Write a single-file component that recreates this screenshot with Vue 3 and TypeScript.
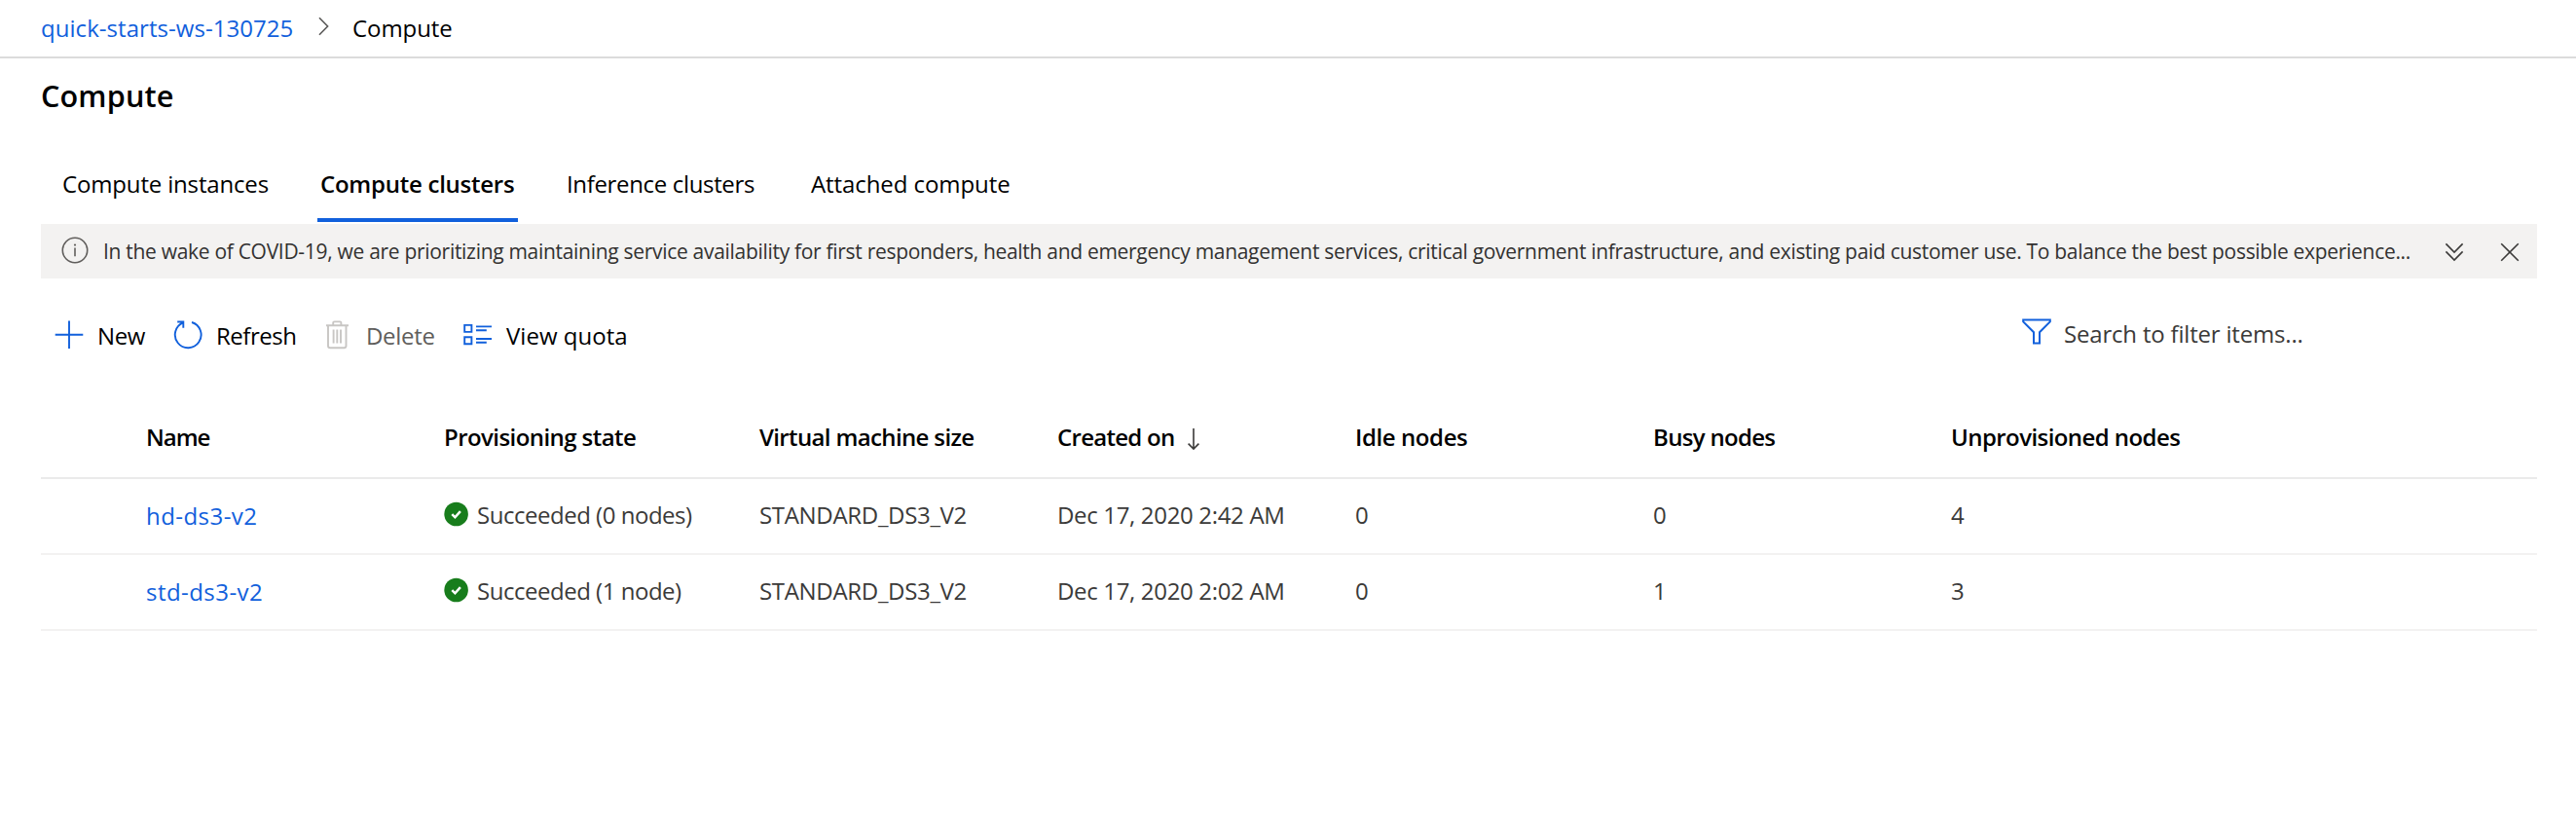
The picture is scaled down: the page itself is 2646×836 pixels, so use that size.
<script setup lang="ts">
interface Cluster {
  name: string
  state: string
  size: string
  created: string
  idle: number
  busy: number
  unprovisioned: number
}

const tabs: { id: string; label: string }[] = [
  { id: 'instances', label: 'Compute instances' },
  { id: 'clusters', label: 'Compute clusters' },
  { id: 'inference', label: 'Inference clusters' },
  { id: 'attached', label: 'Attached compute' },
]
const activeTab = 'clusters'

const clusters: Cluster[] = [
  { name: 'hd-ds3-v2', state: 'Succeeded (0 nodes)', size: 'STANDARD_DS3_V2', created: 'Dec 17, 2020 2:42 AM', idle: 0, busy: 0, unprovisioned: 4 },
  { name: 'std-ds3-v2', state: 'Succeeded (1 node)', size: 'STANDARD_DS3_V2', created: 'Dec 17, 2020 2:02 AM', idle: 0, busy: 1, unprovisioned: 3 },
]
</script>

<template>
  <div class="page">
    <nav class="crumbs">
      <a class="crumb-link">quick-starts-ws-130725</a>
      <svg class="crumb-sep" width="12" height="20" viewBox="0 0 12 20"><path d="M1 1.2 9.6 10 1 18.8" /></svg>
      <span class="crumb-current">Compute</span>
    </nav>

    <main class="content">
      <h1 class="title">Compute</h1>

      <div class="tabs">
        <a v-for="tab in tabs" :key="tab.id" class="tab" :class="[tab.id, { active: tab.id === activeTab }]">{{ tab.label }}</a>
      </div>

      <div class="notice">
        <svg class="info" width="28" height="28" viewBox="0 0 28 28">
          <circle cx="14" cy="14" r="12.7" />
          <path d="M14 11.6V20.2" />
          <circle class="dot" cx="14" cy="8.6" r="1.1" />
        </svg>
        <p class="notice-text">In the wake of COVID-19, we are prioritizing maintaining service availability for first responders, health and emergency management services, critical government infrastructure, and existing paid customer use. To balance the best possible experience...</p>
        <svg class="expand" width="20" height="20" viewBox="0 0 20 20"><path d="M1.4 1.4 10 10 18.6 1.4M1.4 9.4 10 18 18.6 9.4" /></svg>
        <svg class="close" width="20" height="20" viewBox="0 0 20 20"><path d="M1.2 1.2 18.8 18.8M18.8 1.2 1.2 18.8" /></svg>
      </div>

      <div class="toolbar">
        <button class="tool new">
          <svg width="32" height="32" viewBox="0 0 32 32"><path d="M16 1.5V30M1.7 15.7H30.3" /></svg>
          <span>New</span>
        </button>
        <button class="tool refresh">
          <svg width="32" height="32" viewBox="0 0 32 32"><path d="M20 3A13.4 13.4 0 1 1 11.2 3.4M5.2 2.5H11.3V8.8" /></svg>
          <span>Refresh</span>
        </button>
        <button class="tool delete">
          <svg width="32" height="32" viewBox="0 0 32 32"><path d="M5 6.2H28M12.2 6V3.6Q12.2 2.4 13.4 2.4H19.2Q20.4 2.4 20.4 3.6V6M7 6.2V27.2Q7 29.3 9.2 29.3H23.3Q25.5 29.3 25.5 27.2V6.2M12.6 10.5V24.5M16.3 10.5V24.5M20 10.5V24.5" /></svg>
          <span>Delete</span>
        </button>
        <button class="tool quota">
          <svg width="32" height="32" viewBox="0 0 32 32"><path d="M3.2 5.9H10.4V12.9H3.2ZM3.2 18.3H10.4V25.3H3.2ZM15 7.4H31M15 11.2H25.8M15 20H31M15 23.8H25.8" /></svg>
          <span>View quota</span>
        </button>
        <div class="search">
          <svg width="32" height="28" viewBox="0 0 32 28"><path d="M2.2 2.4H29.8V4.4L19 15.2V26.4H13V15.2L2.2 4.4Z" /></svg>
          <span>Search to filter items...</span>
        </div>
      </div>

      <div class="table">
        <div class="row head">
          <span class="h-name">Name</span>
          <span class="h-state">Provisioning state</span>
          <span class="h-size">Virtual machine size</span>
          <span class="h-created">Created on<svg class="sort" width="14" height="24" viewBox="0 0 14 24"><path d="M7 1V22M1.6 16.6 7 22 12.4 16.6" /></svg></span>
          <span class="h-idle">Idle nodes</span>
          <span class="h-busy">Busy nodes</span>
          <span class="h-unprov">Unprovisioned nodes</span>
        </div>
        <div v-for="c in clusters" :key="c.name" class="row">
          <a class="name">{{ c.name }}</a>
          <span class="state">
            <svg class="ok" width="26" height="26" viewBox="0 0 26 26">
              <circle cx="12.6" cy="13" r="12.3" />
              <path d="M8.3 13.2 11.4 16.3 16.9 10.2" />
            </svg>
            <span>{{ c.state }}</span>
          </span>
          <span class="size">{{ c.size }}</span>
          <span class="created">{{ c.created }}</span>
          <span>{{ c.idle }}</span>
          <span>{{ c.busy }}</span>
          <span>{{ c.unprovisioned }}</span>
        </div>
      </div>
    </main>
  </div>
</template>

<style>
body {
  margin: 0;
  background: #fff;
}
</style>

<style scoped>
.page {
  height: 836px;
  overflow: hidden;
  color: #000;
  background: #fff;
  font: 24px/32px "Open Sans", "Noto Sans", sans-serif;
  white-space: nowrap;
}
svg {
  display: block;
  flex: none;
  fill: none;
  stroke: #3b3a39;
  stroke-width: 1.6;
}
.crumbs {
  display: flex;
  align-items: center;
  height: 58px;
  padding-left: 42px;
  border-bottom: 2px solid #dcdcdc;
}
.crumb-link {
  width: 285px;
  color: #1160dc;
  letter-spacing: 0.05px;
}
.crumb-sep {
  margin-top: -4px;
  stroke: #5a5958;
}
.crumb-current {
  margin-left: 23px;
  letter-spacing: -0.07px;
}
.content {
  padding: 0 40px 0 42px;
}
.title {
  margin: 0;
  padding-top: 18px;
  height: 88px;
  font-size: 30.6px;
  font-weight: 600;
  line-height: 40px;
  letter-spacing: 0.15px;
}
.tabs {
  display: grid;
  grid-template-columns: 265px 253px 251px auto;
  justify-content: start;
  height: 62px;
  padding: 0 0 2px 19px;
}
.tab {
  box-sizing: border-box;
  height: 62px;
  padding: 7px 0 0 3px;
}
.instances {
  letter-spacing: -0.16px;
}
.clusters {
  letter-spacing: -0.25px;
}
.inference {
  letter-spacing: -0.34px;
}
.attached {
  letter-spacing: -0.08px;
}
.tab.active {
  width: 206px;
  border-bottom: 4px solid #1160dc;
  font-weight: 600;
}
.notice {
  display: flex;
  align-items: center;
  height: 56px;
  background: #f3f2f1;
}
.info {
  margin: -3px 15px 0 21px;
  stroke: #605e5c;
}
.info .dot {
  fill: #605e5c;
  stroke: none;
}
.notice-text {
  margin: 0;
  width: 2405px;
  color: #323130;
  font-size: 21px;
  letter-spacing: -0.3px;
}
.expand {
  margin-top: 2px;
}
.close {
  margin: 2px 0 0 37px;
}
.toolbar {
  display: flex;
  height: 48px;
  margin-top: 34px;
  padding-left: 13px;
}
.tool {
  display: flex;
  align-items: center;
  box-sizing: border-box;
  padding: 0;
  border: 0;
  background: none;
  color: #000;
  font: inherit;
}
.tool svg {
  stroke: #1160dc;
  stroke-width: 1.9;
}
.tool span {
  padding-top: 1px;
}
.new {
  width: 122px;
  gap: 13px;
  letter-spacing: -0.37px;
}
.refresh {
  width: 153px;
  gap: 13px;
  letter-spacing: -0.46px;
}
.delete {
  width: 144px;
  gap: 14px;
  color: #605e5c;
  letter-spacing: -0.32px;
}
.tool.delete svg {
  stroke: #c8c6c4;
}
.quota {
  gap: 14px;
  letter-spacing: 0.03px;
}
.search {
  display: flex;
  align-items: center;
  height: 46px;
  margin-left: auto;
  width: 530px;
  gap: 12px;
  color: #3b3a39;
  letter-spacing: -0.19px;
}
.search svg {
  margin-top: -7px;
  stroke: #1160dc;
  stroke-width: 2;
}
.table {
  margin-top: 40px;
}
.row {
  display: grid;
  grid-template-columns: 306px 324px 306px 306px 306px 306px 1fr;
  align-items: center;
  height: 76px;
  padding-left: 108px;
  border-bottom: 2px solid #f3f2f1;
  color: #3b3a39;
}
.row > span {
  padding-bottom: 2px;
}
.head {
  height: 82px;
  border-color: #eaeaea;
  color: #000;
  font-weight: 600;
}
.row.head > span {
  padding-bottom: 0;
}
.h-name {
  letter-spacing: -1px;
}
.h-state,
.h-unprov {
  letter-spacing: -0.57px;
}
.h-size {
  letter-spacing: -0.64px;
}
.h-created {
  display: flex;
  align-items: center;
  letter-spacing: -0.72px;
}
.sort {
  margin: 4px 0 0 12px;
}
.h-idle {
  letter-spacing: -0.4px;
}
.h-busy {
  letter-spacing: -0.69px;
}
.name {
  color: #1160dc;
  letter-spacing: 0.45px;
}
.state {
  display: flex;
  align-items: center;
  gap: 8px;
  letter-spacing: -0.48px;
}
.ok {
  margin-top: -3px;
}
.ok circle {
  fill: #187d1c;
  stroke: none;
}
.ok path {
  stroke: #fff;
  stroke-width: 2.5;
}
.size {
  letter-spacing: -0.32px;
}
.created {
  letter-spacing: -0.33px;
}
</style>
